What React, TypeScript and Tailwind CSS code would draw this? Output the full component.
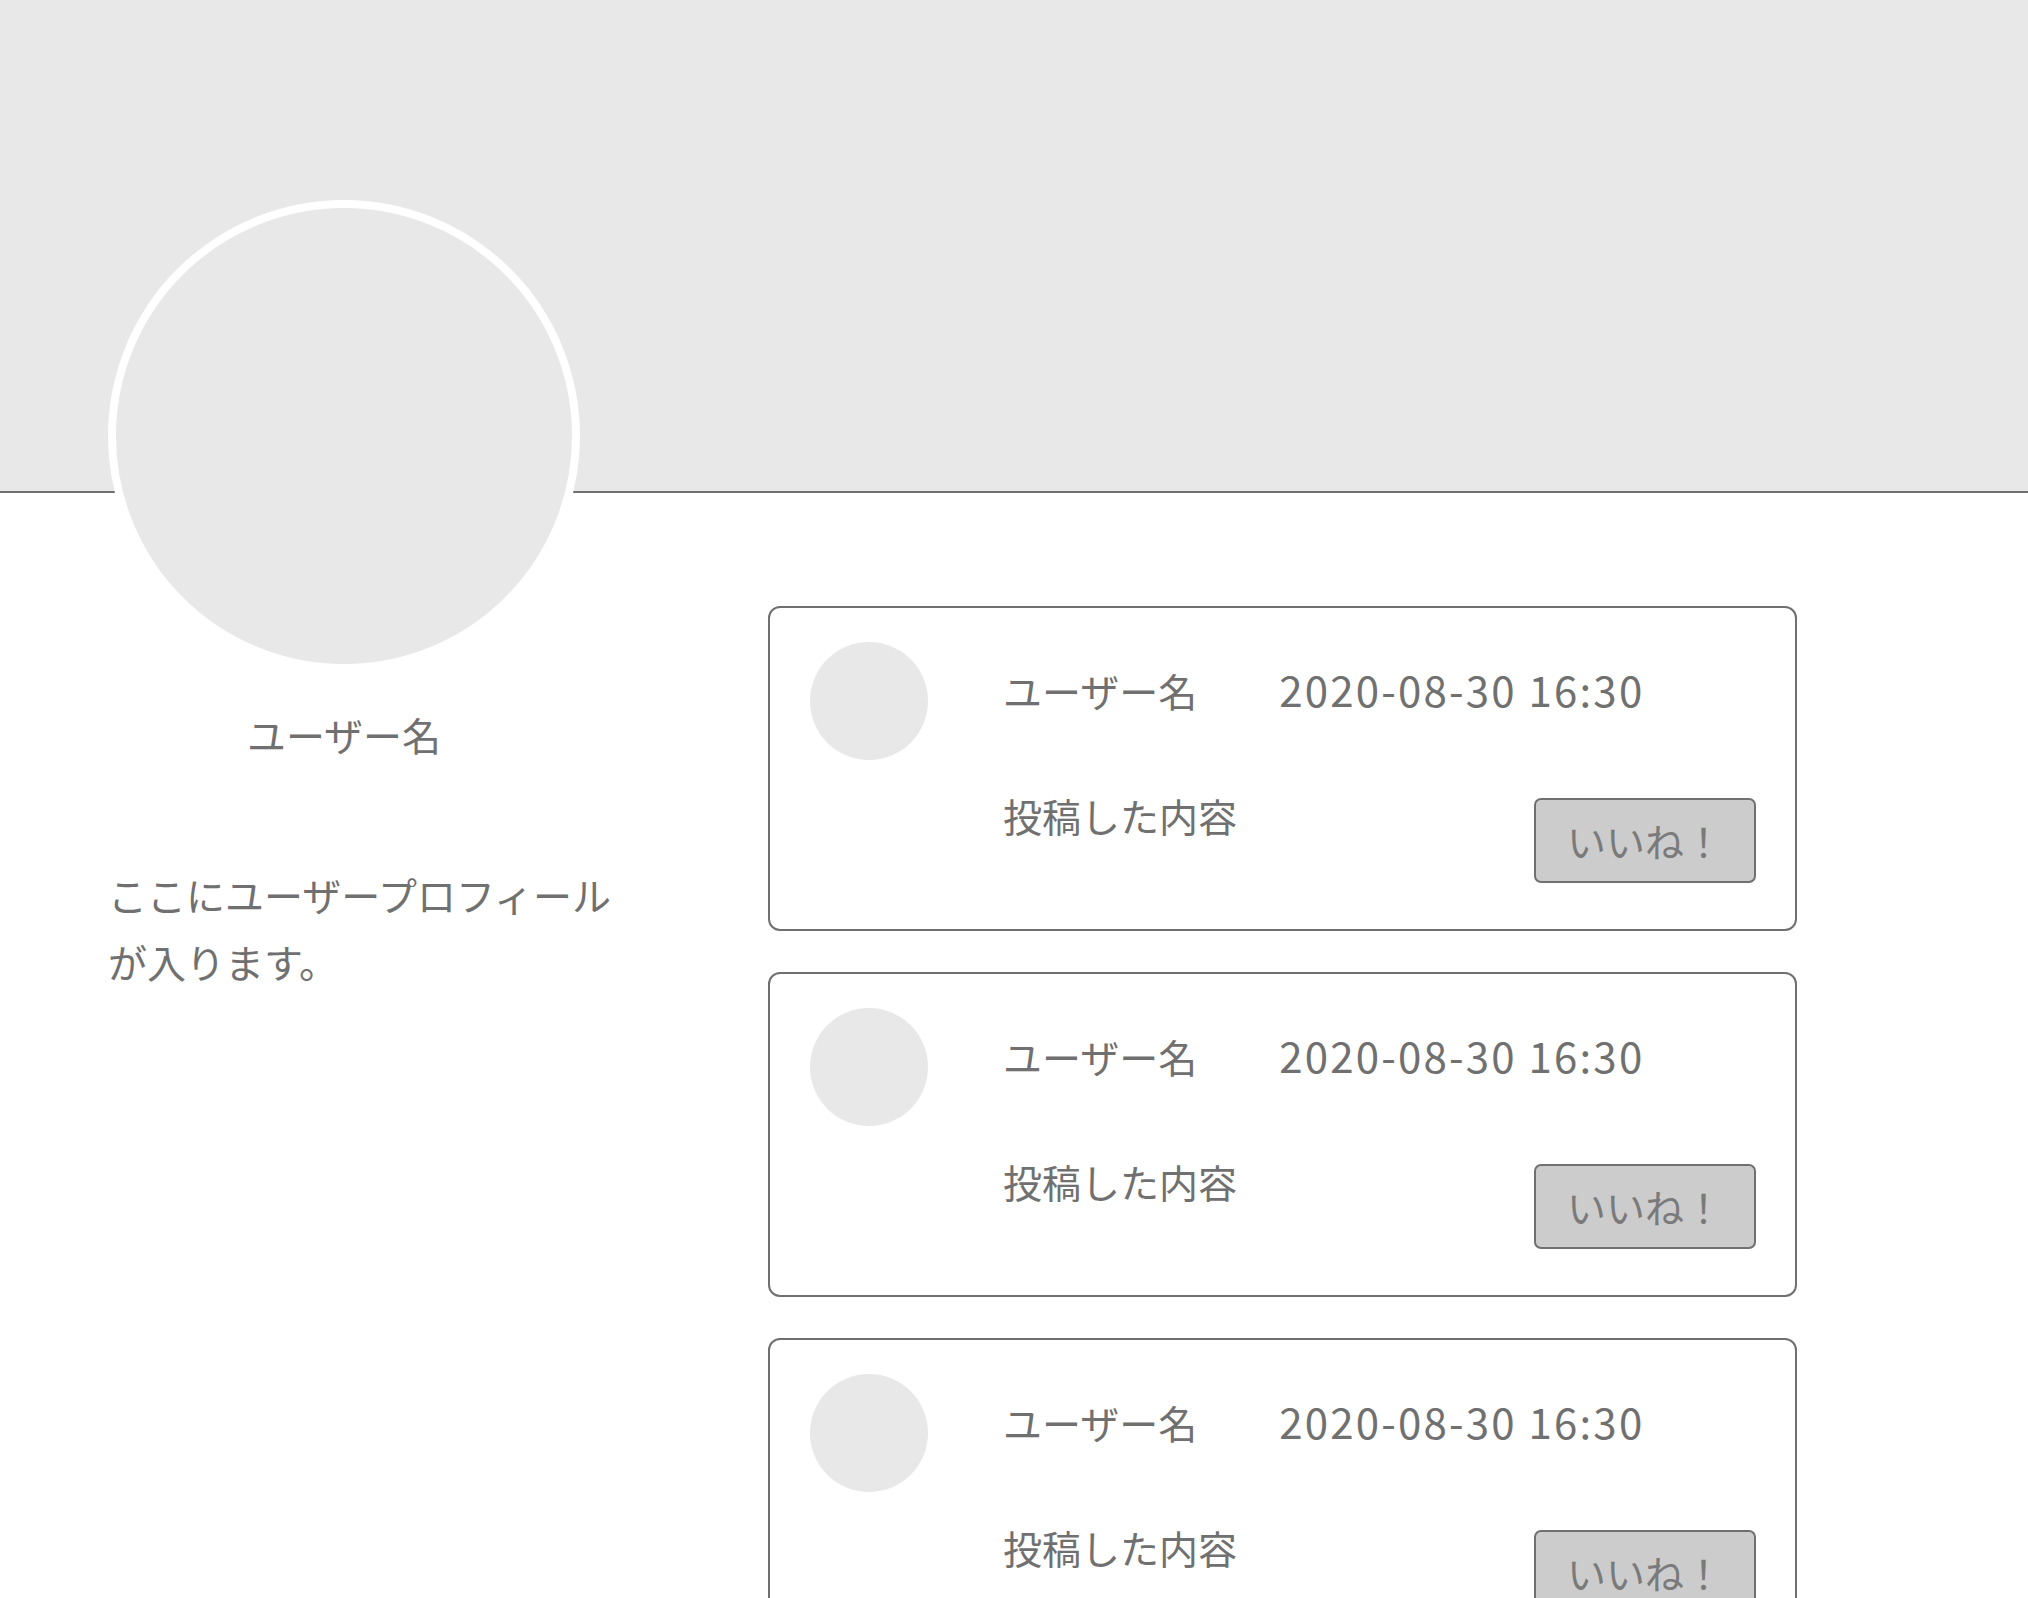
import React from 'react';

const font = { fontFamily: '"Noto Sans CJK JP", "Noto Sans", sans-serif' };

const PostCard: React.FC = () => {
  return (
    <div className="flex rounded-[12px] border-2 border-[#707070] bg-white pt-[34px] pl-[40px] pr-[39px] pb-[46px]">
      <div className="h-[118px] w-[118px] shrink-0 rounded-full bg-[#e8e8e8]" />
      <div className="ml-[75px] flex-1 pt-[18px]">
        <div className="flex h-[58px] items-baseline leading-[58px] text-[#707070]">
          <span className="text-[39px]">ユーザー名</span>
          <span className="ml-[82px] text-[42px] tracking-[2.2px]">2020-08-30 16:30</span>
        </div>
        <div className="mt-[68px] flex items-start justify-between">
          <span className="text-[39px] leading-[58px] text-[#707070]">投稿した内容</span>
          <button className="mt-[12px] h-[85px] w-[222px] rounded-[7px] border-2 border-[#707070] bg-[#cccccc] text-[39px] leading-none text-[#7a7a7a]">
            いいね！
          </button>
        </div>
      </div>
    </div>
  );
};

export default function App() {
  return (
    <div className="min-h-screen bg-white" style={font}>
      <header className="h-[493px] border-b-2 border-[#707070] bg-[#e8e8e8]" />

      <main className="flex pl-[108px]">
        <aside className="relative z-10 -mt-[293px] w-[520px] shrink-0">
          <div className="h-[472px] w-[472px] rounded-full border-8 border-white bg-[#e8e8e8]" />
          <p className="mt-[33px] w-[472px] text-center text-[39px] leading-[58px] text-[#707070]">ユーザー名</p>
          <p className="mt-[98px] text-[39px] leading-[67px] text-[#707070]">
            ここにユーザープロフィールが入ります。
          </p>
        </aside>

        <section className="ml-[140px] flex w-[1029px] flex-col gap-[41px] pt-[113px]">
          <PostCard />
          <PostCard />
          <PostCard />
        </section>
      </main>
    </div>
  );
}
